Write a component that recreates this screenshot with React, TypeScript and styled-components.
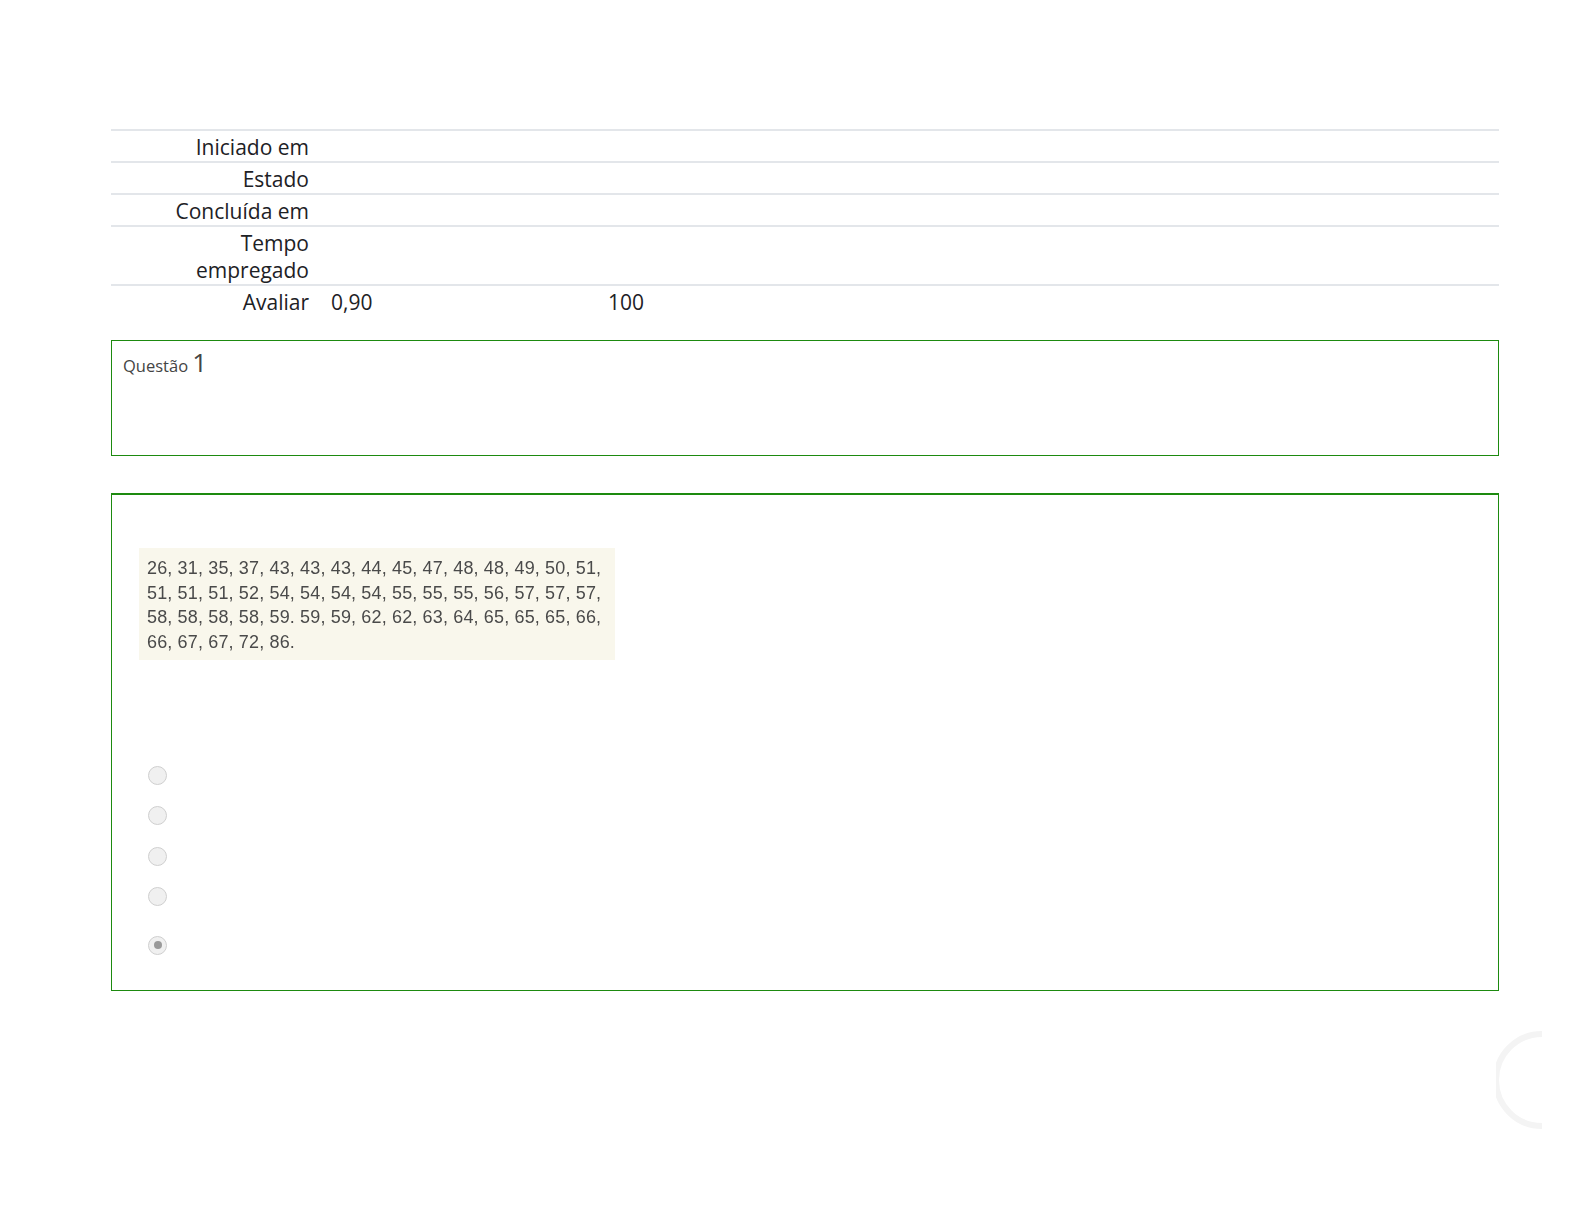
import styled, { createGlobalStyle } from 'styled-components'

const Global = createGlobalStyle`
html, body{
    margin: 0;
    overflow: hidden;
}
body{
    background: #ffffff;
    font-family: "Open Sans", "Liberation Sans", sans-serif;
    color: #1d2125;
}
`

const summary = [
    { label: 'Iniciado em', value: '', extra: '' },
    { label: 'Estado', value: '', extra: '' },
    { label: 'Concluída em', value: '', extra: '' },
    { label: 'Tempo empregado', value: '', extra: '', wrap: true },
    { label: 'Avaliar', value: '0,90', extra: '100' },
]

const numbers = [
    '26, 31, 35, 37, 43, 43, 43, 44, 45, 47, 48, 48, 49, 50, 51,',
    '51, 51, 51, 52, 54, 54, 54, 54, 55, 55, 55, 56, 57, 57, 57,',
    '58, 58, 58, 58, 59. 59, 59, 62, 62, 63, 64, 65, 65, 65, 66,',
    '66, 67, 67, 72, 86.',
]

const options = [false, false, false, false, true]

const App = () => {
    return (
        <Page>
            <Global />
            <Container>
                <Summary>
                    {summary.map((row) => (
                        <Row key={row.label}>
                            <Label $wrap={!!row.wrap}>{row.label}</Label>
                            <Value>{row.value}</Value>
                            <Extra>{row.extra}</Extra>
                        </Row>
                    ))}
                </Summary>

                <InfoBox>
                    <QNo>
                        Questão <Big>1</Big>
                    </QNo>
                </InfoBox>

                <ContentBox>
                    <DataImage>
                        {numbers.map((line) => (
                            <span key={line}>{line}</span>
                        ))}
                    </DataImage>
                    <Answers>
                        {options.map((checked, i) => (
                            <Option key={i} $last={i === options.length - 1}>
                                <Radio $checked={checked} />
                            </Option>
                        ))}
                    </Answers>
                </ContentBox>
            </Container>
            <Spinner width="60" height="100" viewBox="0 0 60 100">
                <path d="M46 4 A46 46 0 0 0 46 96" fill="none" stroke="#f4f4f4" strokeWidth="6" />
            </Spinner>
        </Page>
    )
}

export default App

const Page = styled.div`
position: relative;
width: 100%;
height: 1224px;
overflow: hidden;
`

const Container = styled.div`
width: 1388px;
margin-left: 111px;
padding-top: 129px;
display: flex;
flex-direction: column;
`

const Summary = styled.div`
display: flex;
flex-direction: column;
border-top: 2px solid #e3e6ea;
`

const Row = styled.div`
display: grid;
grid-template-columns: 209px 288px 1fr;
border-bottom: 2px solid #e3e6ea;
font-size: 21px;
line-height: 27px;
padding: 3px 0 0;
&:last-child{
    border-bottom: none;
}
`

const Label = styled.div<{ $wrap: boolean }>`
text-align: right;
padding-right: 11px;
padding-left: ${(p) => (p.$wrap ? '72px' : '0')};
color: #1d2125;
`

const Value = styled.div`
padding-left: 11px;
`

const Extra = styled.div``

const InfoBox = styled.div`
margin-top: 24px;
height: 116px;
box-sizing: border-box;
border: 1px solid #1d8a0f;
padding: 6px 11px;
`

const QNo = styled.div`
font-size: 16.5px;
line-height: 30px;
color: #444;
`

const Big = styled.span`
font-size: 26px;
color: #444;
`

const ContentBox = styled.div`
margin-top: 37px;
height: 498px;
box-sizing: border-box;
border: 1px solid #1d8a0f;
border-top-width: 2px;
padding: 53px 27px 0;
`

const DataImage = styled.div`
width: 476px;
height: 112px;
box-sizing: border-box;
background: #f9f7ec;
padding: 8px 8px 0 8px;
display: flex;
flex-direction: column;
font-family: "Liberation Sans", Arial, sans-serif;
font-size: 18px;
line-height: 24.5px;
letter-spacing: 0.15px;
color: #4a4a4a;
white-space: nowrap;
filter: blur(0.3px);
`

const Answers = styled.div`
margin-top: 106px;
padding-left: 9px;
display: flex;
flex-direction: column;
`

const Option = styled.div<{ $last: boolean }>`
height: 18px;
margin-bottom: 22.5px;
margin-top: ${(p) => (p.$last ? '8px' : '0')};
display: flex;
align-items: center;
`

const Radio = styled.span<{ $checked: boolean }>`
width: 17px;
height: 17px;
border-radius: 50%;
border: 1px solid #cfcfcf;
background: #f0f0f0;
display: flex;
align-items: center;
justify-content: center;
&::after{
    content: '';
    display: ${(p) => (p.$checked ? 'block' : 'none')};
    width: 8px;
    height: 8px;
    border-radius: 50%;
    background: #9a9a9a;
}
`

const Spinner = styled.svg`
position: absolute;
left: 1496px;
top: 1030px;
`
